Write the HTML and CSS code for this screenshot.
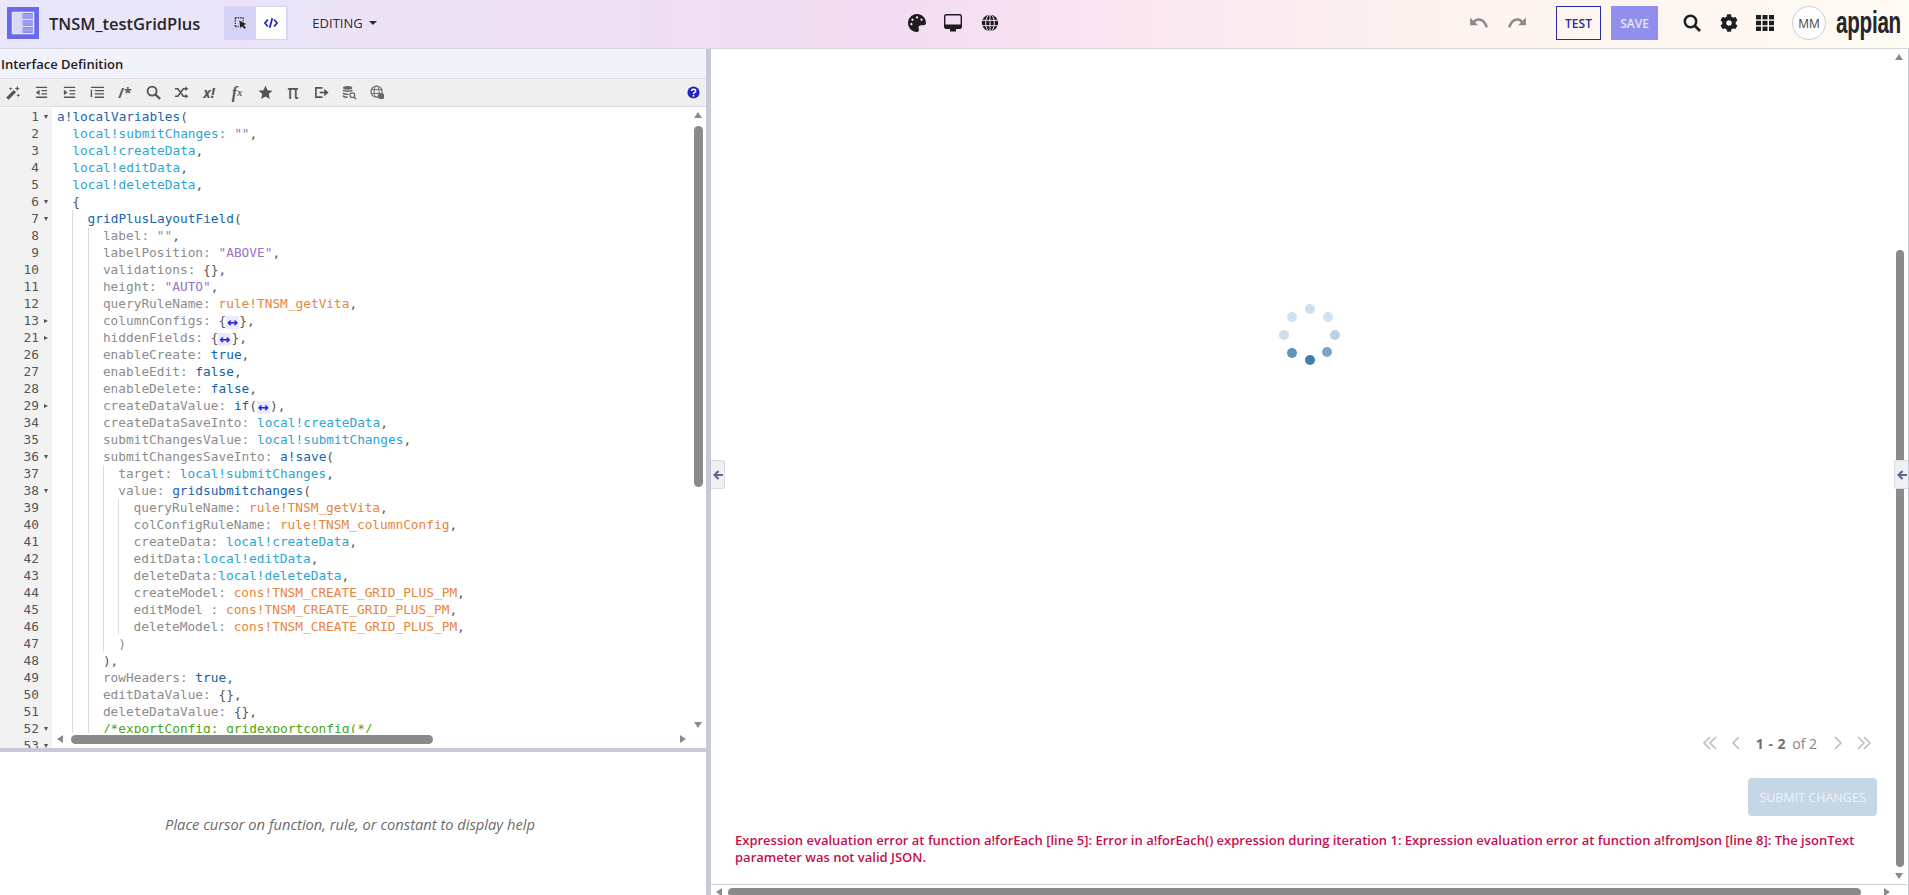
FILE: index.html
```html
<!DOCTYPE html>
<html lang="en">
<head>
    <meta charset="UTF-8">
    <meta name="viewport" content="width=device-width, initial-scale=1.0">
    <title>TNSM_testGridPlus</title>
    <link rel="stylesheet" href="styles.css">
</head>
<body>
    <header class="topbar">
        <div class="top-left">
            <svg class="app-logo" viewBox="0 0 32 32">
                <rect width="32" height="32" fill="#6a6ae6"/>
                <rect x="5.5" y="5.5" width="21" height="21" fill="none" stroke="#e4e4fb" stroke-width="1.5"/>
                <rect x="6" y="6" width="8.5" height="20" fill="#d8d8f8"/>
                <rect x="16" y="7" width="10" height="4.5" fill="#9c9cf0"/>
                <rect x="16" y="13.7" width="10" height="4.5" fill="#9c9cf0"/>
                <rect x="16" y="20.4" width="10" height="4.5" fill="#9c9cf0"/>
                <path d="M15 6v20M15.500 12.500H26M15.500 19.300H26" stroke="#e4e4fb" stroke-width="1.3"/>
            </svg>
            <span class="app-title">TNSM_testGridPlus</span>
            <div class="mode-toggle">
                <span class="mode-btn">
                    <svg class="icon-sm" viewBox="0 0 16 16">
                        <path d="M1.500 2h9M1.500 2v10M1.500 12h4M10.500 2v4" fill="none" stroke="#333" stroke-width="1.600" stroke-dasharray="1.600 1.200"/>
                        <path d="M6 5l8 4-3 1.300 2.600 3.200-1.700 1.300-2.500-3.200L7.300 14z" fill="#222"/>
                    </svg>
                </span>
                <span class="mode-btn active">
                    <svg class="icon-sm" viewBox="0 0 16 16">
                        <path d="M4.500 4L1 8l3.500 4M11.500 4L15 8l-3.500 4M9.500 2.500l-3 11" fill="none" stroke="#2323c4" stroke-width="2"/>
                    </svg>
                </span>
            </div>
            <span class="status">EDITING<i class="caret"></i></span>
        </div>
        <div class="top-center">
            <svg class="icon-lg" viewBox="0 0 512 512"><path fill="#1d1d1f" d="M204.3 5C104.9 24.4 24.8 104.3 5.2 203.4c-37 187 131.700 326.400 258.800 306.700 41.200-6.400 61.400-54.600 42.500-91.700-23.100-45.400 9.900-98.400 60.900-98.400h79.700c35.800 0 64.800-29.600 64.900-65.300C511.500 97.100 368.100-26.900 204.300 5zM96 320c-17.700 0-32-14.300-32-32s14.300-32 32-32 32 14.300 32 32-14.300 32-32 32zm32-128c-17.700 0-32-14.300-32-32s14.300-32 32-32 32 14.300 32 32-14.300 32-32 32zm128-64c-17.700 0-32-14.300-32-32s14.300-32 32-32 32 14.300 32 32-14.300 32-32 32zm128 64c-17.700 0-32-14.300-32-32s14.300-32 32-32 32 14.300 32 32-14.300 32-32 32z"/></svg>
            <svg class="icon-lg" viewBox="0 0 18 18">
                <rect x="0.700" y="0.700" width="16.600" height="13.600" rx="1.500" fill="none" stroke="#1d1d1f" stroke-width="1.400"/>
                <rect x="1" y="10.500" width="16" height="4" fill="#1d1d1f"/>
                <rect x="6" y="14" width="6" height="3.500" fill="#1d1d1f"/>
            </svg>
            <svg class="icon-lg" viewBox="0 0 18 18">
                <circle cx="9" cy="9" r="8.200" fill="#1d1d1f"/>
                <path d="M0 6.300h18M0 11.700h18M9 0v18" stroke="#f5e0f1" stroke-width="1"/>
                <ellipse cx="9" cy="9" rx="4.300" ry="8.400" fill="none" stroke="#f5e0f1" stroke-width="1"/>
            </svg>
        </div>
        <div class="top-right">
            <svg class="icon-history undo" viewBox="0 0 18 14"><path d="M4 6.500C7 2.500 13.500 2.500 16 11" fill="none" stroke="#8a8a8a" stroke-width="2.200"/><path d="M1 2v7h7z" fill="#8a8a8a"/></svg>
            <svg class="icon-history redo" viewBox="0 0 18 14"><path d="M14 6.500C11 2.500 4.500 2.500 2 11" fill="none" stroke="#8a8a8a" stroke-width="2.200"/><path d="M17 2v7h-7z" fill="#8a8a8a"/></svg>
            <button class="btn-test">TEST</button>
            <button class="btn-save">SAVE</button>
            <svg class="icon-action search" viewBox="0 0 18 18"><circle cx="7.500" cy="7.500" r="5.700" fill="none" stroke="#1d1d1f" stroke-width="2.500"/><path d="M11.800 11.800L17 17" stroke="#1d1d1f" stroke-width="2.800"/></svg>
            <svg class="icon-action gear" viewBox="0 0 512 512"><path fill="#1d1d1f" d="M487.400 315.700l-42.600-24.600c4.300-23.200 4.300-47 0-70.200l42.600-24.600c4.900-2.800 7.100-8.600 5.500-14-11.100-35.600-30-67.800-54.700-94.600-3.800-4.100-10-5.100-14.800-2.300L380.800 110c-17.900-15.400-38.500-27.300-60.800-35.100V25.800c0-5.600-3.900-10.500-9.400-11.700-36.700-8.200-74.300-7.800-109.200 0-5.500 1.200-9.400 6.100-9.400 11.700V75c-22.200 7.900-42.800 19.800-60.800 35.100L88.700 85.500c-4.900-2.800-11-1.900-14.800 2.300-24.700 26.700-43.600 58.900-54.700 94.600-1.700 5.400.6 11.200 5.500 14L67.300 221c-4.300 23.200-4.300 47 0 70.200l-42.600 24.600c-4.900 2.800-7.100 8.600-5.500 14 11.100 35.600 30 67.800 54.700 94.600 3.800 4.100 10 5.100 14.800 2.300l42.600-24.600c17.900 15.400 38.500 27.300 60.800 35.100v49.200c0 5.600 3.900 10.500 9.400 11.700 36.700 8.200 74.300 7.800 109.200 0 5.500-1.200 9.400-6.100 9.400-11.700v-49.200c22.200-7.900 42.800-19.800 60.800-35.100l42.600 24.600c4.900 2.800 11 1.900 14.800-2.300 24.700-26.700 43.600-58.900 54.700-94.600 1.500-5.500-.7-11.300-5.600-14.100zM256 336c-44.100 0-80-35.900-80-80s35.900-80 80-80 80 35.900 80 80-35.900 80-80 80z"/></svg>
            <svg class="icon-action grid" viewBox="0 0 18 16" fill="#1d1d1f">
                <rect x="0" y="0" width="5" height="4.400"/><rect x="6.500" y="0" width="5" height="4.400"/><rect x="13" y="0" width="5" height="4.400"/>
                <rect x="0" y="5.800" width="5" height="4.400"/><rect x="6.500" y="5.800" width="5" height="4.400"/><rect x="13" y="5.800" width="5" height="4.400"/>
                <rect x="0" y="11.600" width="5" height="4.400"/><rect x="6.500" y="11.600" width="5" height="4.400"/><rect x="13" y="11.600" width="5" height="4.400"/>
            </svg>
            <span class="avatar">MM</span>
            <span class="brand">appian</span>
        </div>
    </header>

    <main class="workspace">
        <section class="left-pane">
            <div class="pane-title">Interface Definition</div>
            <div class="toolbar">
                <span class="tool"><svg viewBox="0 0 16 16"><path d="M1.500 14.500l8-8" stroke="#555" stroke-width="3.400"/><path d="M12 1l.8 2 2 .8-2 .8-.8 2-.8-2-2-.8 2-.8zM5 2l.5 1.300L7 4l-1.500.6L5 6l-.5-1.400L3 4l1.500-.7zM13 9l.5 1.300 1.500.7-1.500.6L13 13l-.5-1.400L11 11l1.500-.7z" fill="#555"/></svg></span>
                <span class="tool"><svg viewBox="0 0 16 16"><path d="M2 2.500h12M8 6h6M8 9.500h6M2 13h12" stroke="#555" stroke-width="1.500"/><path d="M6 5v6L2 8z" fill="#555"/></svg></span>
                <span class="tool"><svg viewBox="0 0 16 16"><path d="M2 2.500h12M8 6h6M8 9.500h6M2 13h12" stroke="#555" stroke-width="1.500"/><path d="M2 5v6l4-3z" fill="#555"/></svg></span>
                <span class="tool"><svg viewBox="0 0 16 16"><path d="M1 2.500h14M5 6h10M5 9.500h10M5 13h10" stroke="#555" stroke-width="1.500"/><path d="M1.500 5v8" stroke="#555" stroke-width="1.500"/></svg></span>
                <span class="tool tool-text">/*</span>
                <span class="tool"><svg viewBox="0 0 16 16"><circle cx="6.500" cy="6.500" r="4.800" fill="none" stroke="#555" stroke-width="2"/><path d="M10 10l5 5" stroke="#555" stroke-width="2.400"/></svg></span>
                <span class="tool"><svg viewBox="0 0 16 16"><path d="M1 4h3l6 8h3M1 12h3l6-8h3" fill="none" stroke="#555" stroke-width="1.800"/><path d="M12 1.500l3.500 2.500L12 6.500zM12 9.500l3.500 2.500-3.500 2.500z" fill="#555"/></svg></span>
                <span class="tool tool-text tool-italic">x!</span>
                <span class="tool tool-text tool-fx">f<small>x</small></span>
                <span class="tool"><svg viewBox="0 0 16 16"><path d="M8 .8l2.200 4.800 5.200.6-3.900 3.500 1.100 5.200L8 12.300l-4.600 2.600 1.100-5.200L.6 6.200l5.200-.6z" fill="#555"/></svg></span>
                <span class="tool tool-text tool-pi">π</span>
                <span class="tool"><svg viewBox="0 0 16 16"><path d="M9 3H2v10h7" fill="none" stroke="#555" stroke-width="1.800"/><path d="M6 8h6" stroke="#555" stroke-width="1.800"/><path d="M11 4l4.500 4-4.500 4z" fill="#555"/></svg></span>
                <span class="tool"><svg viewBox="0 0 16 16"><ellipse cx="6" cy="3" rx="5" ry="2" fill="#666"/><path d="M1 5.500c1 1.500 9 1.500 10 0M1 8.500c1 1.500 5 1.500 6 1.200M1 11.500c1 1.300 4 1.500 5 1.300" fill="none" stroke="#666" stroke-width="1.600"/><circle cx="11" cy="11" r="2.500" fill="none" stroke="#666" stroke-width="1.300"/><path d="M13 13l2 2" stroke="#666" stroke-width="1.500"/></svg></span>
                <span class="tool"><svg viewBox="0 0 16 16"><circle cx="7" cy="7" r="6" fill="none" stroke="#666" stroke-width="1.200"/><ellipse cx="7" cy="7" rx="2.700" ry="6" fill="none" stroke="#666" stroke-width="1"/><path d="M1 5h12M1 9h12" stroke="#666"/><rect x="9" y="9" width="6" height="6" rx="1.500" fill="#666"/></svg></span>
                <svg class="help" viewBox="0 0 14 14"><circle cx="7" cy="7" r="6.500" fill="#2323c4"/><path d="M4.800 5.300C5 2.900 9.300 2.900 9.300 5.300 9.300 7 7 6.800 7 8.500" fill="none" stroke="#fff" stroke-width="1.700"/><rect x="6.100" y="9.600" width="1.800" height="1.800" fill="#fff"/></svg>
            </div>

            <div class="editor">
                <div class="row"><div class="ln"><span class="num">1</span><i class="fold open"></i></div><div class="src"><span class="fn">a!localVariables</span>(</div></div>
                <div class="row"><div class="ln"><span class="num">2</span></div><div class="src"><i class="sp"></i><span class="var">local!submitChanges</span><span class="key">:</span> <span class="str">""</span>,</div></div>
                <div class="row"><div class="ln"><span class="num">3</span></div><div class="src"><i class="sp"></i><span class="var">local!createData</span>,</div></div>
                <div class="row"><div class="ln"><span class="num">4</span></div><div class="src"><i class="sp"></i><span class="var">local!editData</span>,</div></div>
                <div class="row"><div class="ln"><span class="num">5</span></div><div class="src"><i class="sp"></i><span class="var">local!deleteData</span>,</div></div>
                <div class="row"><div class="ln"><span class="num">6</span><i class="fold open"></i></div><div class="src"><i class="sp"></i>{</div></div>
                <div class="row"><div class="ln"><span class="num">7</span><i class="fold open"></i></div><div class="src"><i class="sp"></i><i class="g"></i><span class="fn">gridPlusLayoutField</span>(</div></div>
                <div class="row"><div class="ln"><span class="num">8</span></div><div class="src"><i class="sp"></i><i class="g"></i><i class="g"></i><span class="key">label:</span> <span class="key">""</span>,</div></div>
                <div class="row"><div class="ln"><span class="num">9</span></div><div class="src"><i class="sp"></i><i class="g"></i><i class="g"></i><span class="key">labelPosition:</span> <span class="str">"ABOVE"</span>,</div></div>
                <div class="row"><div class="ln"><span class="num">10</span></div><div class="src"><i class="sp"></i><i class="g"></i><i class="g"></i><span class="key">validations:</span> {},</div></div>
                <div class="row"><div class="ln"><span class="num">11</span></div><div class="src"><i class="sp"></i><i class="g"></i><i class="g"></i><span class="key">height:</span> <span class="str">"AUTO"</span>,</div></div>
                <div class="row"><div class="ln"><span class="num">12</span></div><div class="src"><i class="sp"></i><i class="g"></i><i class="g"></i><span class="key">queryRuleName:</span> <span class="rule">rule!TNSM_getVita</span>,</div></div>
                <div class="row"><div class="ln"><span class="num">13</span><i class="fold shut"></i></div><div class="src"><i class="sp"></i><i class="g"></i><i class="g"></i><span class="key">columnConfigs:</span> {<span class="folded">↔</span>},</div></div>
                <div class="row"><div class="ln"><span class="num">21</span><i class="fold shut"></i></div><div class="src"><i class="sp"></i><i class="g"></i><i class="g"></i><span class="key">hiddenFields:</span> {<span class="folded">↔</span>},</div></div>
                <div class="row"><div class="ln"><span class="num">26</span></div><div class="src"><i class="sp"></i><i class="g"></i><i class="g"></i><span class="key">enableCreate:</span> <span class="bool">true</span>,</div></div>
                <div class="row"><div class="ln"><span class="num">27</span></div><div class="src"><i class="sp"></i><i class="g"></i><i class="g"></i><span class="key">enableEdit:</span> <span class="bool">false</span>,</div></div>
                <div class="row"><div class="ln"><span class="num">28</span></div><div class="src"><i class="sp"></i><i class="g"></i><i class="g"></i><span class="key">enableDelete:</span> <span class="bool">false</span>,</div></div>
                <div class="row"><div class="ln"><span class="num">29</span><i class="fold shut"></i></div><div class="src"><i class="sp"></i><i class="g"></i><i class="g"></i><span class="key">createDataValue:</span> <span class="bool">if</span>(<span class="folded">↔</span>),</div></div>
                <div class="row"><div class="ln"><span class="num">34</span></div><div class="src"><i class="sp"></i><i class="g"></i><i class="g"></i><span class="key">createDataSaveInto:</span> <span class="var">local!createData</span>,</div></div>
                <div class="row"><div class="ln"><span class="num">35</span></div><div class="src"><i class="sp"></i><i class="g"></i><i class="g"></i><span class="key">submitChangesValue:</span> <span class="var">local!submitChanges</span>,</div></div>
                <div class="row"><div class="ln"><span class="num">36</span><i class="fold open"></i></div><div class="src"><i class="sp"></i><i class="g"></i><i class="g"></i><span class="key">submitChangesSaveInto:</span> <span class="fn">a!save</span>(</div></div>
                <div class="row"><div class="ln"><span class="num">37</span></div><div class="src"><i class="sp"></i><i class="g"></i><i class="g"></i><i class="g"></i><span class="key">target:</span> <span class="var">local!submitChanges</span>,</div></div>
                <div class="row"><div class="ln"><span class="num">38</span><i class="fold open"></i></div><div class="src"><i class="sp"></i><i class="g"></i><i class="g"></i><i class="g"></i><span class="key">value:</span> <span class="fn">gridsubmitchanges</span>(</div></div>
                <div class="row"><div class="ln"><span class="num">39</span></div><div class="src"><i class="sp"></i><i class="g"></i><i class="g"></i><i class="g"></i><i class="g"></i><span class="key">queryRuleName:</span> <span class="rule">rule!TNSM_getVita</span>,</div></div>
                <div class="row"><div class="ln"><span class="num">40</span></div><div class="src"><i class="sp"></i><i class="g"></i><i class="g"></i><i class="g"></i><i class="g"></i><span class="key">colConfigRuleName:</span> <span class="rule">rule!TNSM_columnConfig</span>,</div></div>
                <div class="row"><div class="ln"><span class="num">41</span></div><div class="src"><i class="sp"></i><i class="g"></i><i class="g"></i><i class="g"></i><i class="g"></i><span class="key">createData:</span> <span class="var">local!createData</span>,</div></div>
                <div class="row"><div class="ln"><span class="num">42</span></div><div class="src"><i class="sp"></i><i class="g"></i><i class="g"></i><i class="g"></i><i class="g"></i><span class="key">editData:</span><span class="var">local!editData</span>,</div></div>
                <div class="row"><div class="ln"><span class="num">43</span></div><div class="src"><i class="sp"></i><i class="g"></i><i class="g"></i><i class="g"></i><i class="g"></i><span class="key">deleteData:</span><span class="var">local!deleteData</span>,</div></div>
                <div class="row"><div class="ln"><span class="num">44</span></div><div class="src"><i class="sp"></i><i class="g"></i><i class="g"></i><i class="g"></i><i class="g"></i><span class="key">createModel:</span> <span class="rule">cons!TNSM_CREATE_GRID_PLUS_PM</span>,</div></div>
                <div class="row"><div class="ln"><span class="num">45</span></div><div class="src"><i class="sp"></i><i class="g"></i><i class="g"></i><i class="g"></i><i class="g"></i><span class="key">editModel :</span> <span class="rule">cons!TNSM_CREATE_GRID_PLUS_PM</span>,</div></div>
                <div class="row"><div class="ln"><span class="num">46</span></div><div class="src"><i class="sp"></i><i class="g"></i><i class="g"></i><i class="g"></i><i class="g"></i><span class="key">deleteModel:</span> <span class="rule">cons!TNSM_CREATE_GRID_PLUS_PM</span>,</div></div>
                <div class="row"><div class="ln"><span class="num">47</span></div><div class="src"><i class="sp"></i><i class="g"></i><i class="g"></i><i class="g"></i><span class="key">)</span></div></div>
                <div class="row"><div class="ln"><span class="num">48</span></div><div class="src"><i class="sp"></i><i class="g"></i><i class="g"></i>),</div></div>
                <div class="row"><div class="ln"><span class="num">49</span></div><div class="src"><i class="sp"></i><i class="g"></i><i class="g"></i><span class="key">rowHeaders:</span> <span class="bool">true</span>,</div></div>
                <div class="row"><div class="ln"><span class="num">50</span></div><div class="src"><i class="sp"></i><i class="g"></i><i class="g"></i><span class="key">editDataValue:</span> {},</div></div>
                <div class="row"><div class="ln"><span class="num">51</span></div><div class="src"><i class="sp"></i><i class="g"></i><i class="g"></i><span class="key">deleteDataValue:</span> {},</div></div>
                <div class="row"><div class="ln"><span class="num">52</span><i class="fold open"></i></div><div class="src"><i class="sp"></i><i class="g"></i><i class="g"></i><span class="comment">/*exportConfig: gridexportconfig(*/</span></div></div>
                <div class="row"><div class="ln"><span class="num">53</span><i class="fold open"></i></div><div class="src"></div></div>

                <div class="vbar">
                    <i class="tri tri-up"></i>
                    <i class="thumb-v"></i>
                    <i class="tri tri-down"></i>
                </div>
                <div class="hbar">
                    <i class="tri tri-left"></i>
                    <i class="thumb-h"></i>
                    <i class="tri tri-right"></i>
                </div>
            </div>

            <div class="help-panel">Place cursor on function, rule, or constant to display help</div>
        </section>

        <div class="divider"></div>

        <section class="right-pane">
            <span class="collapse-tab tab-left"><svg viewBox="0 0 10 10"><path d="M5.500 1L1.500 5l4 4M2 5h8" fill="none" stroke="#5a6b85" stroke-width="2.200"/></svg></span>
            <span class="collapse-tab tab-right"><svg viewBox="0 0 10 10"><path d="M5.500 1L1.500 5l4 4M2 5h8" fill="none" stroke="#5a6b85" stroke-width="2.200"/></svg></span>

            <div class="preview">
                <svg class="spinner" viewBox="0 0 62 62">
                    <circle cx="31" cy="5" r="5" fill="#d0dfe9"/>
                    <circle cx="49" cy="13" r="5" fill="#d3e1ec"/>
                    <circle cx="56" cy="31" r="5" fill="#bbd0e2"/>
                    <circle cx="48" cy="48" r="5" fill="#7ea6c4"/>
                    <circle cx="31" cy="56" r="5" fill="#3f7ea9"/>
                    <circle cx="13" cy="49" r="5" fill="#5f93b8"/>
                    <circle cx="5" cy="31" r="5" fill="#d0dee9"/>
                    <circle cx="13" cy="13" r="5" fill="#d3e1ec"/>
                </svg>
                <div class="pager">
                    <svg class="pg-icon" viewBox="0 0 16 16"><path d="M8 2L2 8l6 6M14 2L8 8l6 6" fill="none" stroke="#bdbdbd" stroke-width="1.600"/></svg>
                    <svg class="pg-icon" viewBox="0 0 16 16"><path d="M11 2L5 8l6 6" fill="none" stroke="#bdbdbd" stroke-width="1.600"/></svg>
                    <span class="pg-range"><b>1 - 2</b> of 2</span>
                    <svg class="pg-icon" viewBox="0 0 16 16"><path d="M5 2l6 6-6 6" fill="none" stroke="#bdbdbd" stroke-width="1.600"/></svg>
                    <svg class="pg-icon" viewBox="0 0 16 16"><path d="M2 2l6 6-6 6M8 2l6 6-6 6" fill="none" stroke="#bdbdbd" stroke-width="1.600"/></svg>
                </div>
                <button class="btn-submit">SUBMIT CHANGES</button>
                <p class="error">Expression evaluation error at function a!forEach [line 5]: Error in a!forEach() expression during iteration 1: Expression evaluation error at function a!fromJson [line 8]: The jsonText parameter was not valid JSON.</p>
            </div>

            <div class="vbar-right">
                <i class="tri tri-up"></i>
                <i class="thumb-right"></i>
                <i class="tri tri-down"></i>
            </div>
            <div class="hbar-right">
                <i class="tri tri-left"></i>
                <i class="thumb-bottom"></i>
                <i class="tri tri-right"></i>
            </div>
        </section>
    </main>
</body>
</html>
```

FILE: styles.css
```css
* {
    margin: 0;
    padding: 0;
    box-sizing: border-box;
}

html, body {
    height: 100%;
}

body {
    display: flex;
    flex-direction: column;
    overflow: hidden;
    background: #fff;
    color: #1d1d1f;
    font-family: "Open Sans", "Liberation Sans", sans-serif;
}

i {
    font-style: normal;
}

/* top bar */
.topbar {
    display: grid;
    grid-template-columns: 1fr auto 1fr;
    align-items: center;
    height: 49px;
    flex: none;
    padding-bottom: 2px;
    border-bottom: 1px solid #d6d6de;
    background: linear-gradient(90deg, #e8e7fb 0%, #f3dcf1 47%, #fae5f2 58%, #fdf4ef 78%, #fffaf3 100%);
}

.top-left {
    display: flex;
    align-items: center;
    padding-left: 7px;
}

.app-logo {
    width: 32px;
    height: 32px;
    flex: none;
}

.app-title {
    margin-left: 10px;
    font-size: 16.500px;
    font-weight: 600;
    color: #25252a;
}

.mode-toggle {
    display: flex;
    height: 34px;
    margin-left: 24px;
    background: #d6d4f6;
}

.mode-btn {
    display: flex;
    align-items: center;
    justify-content: center;
    width: 32px;
    padding-left: 2px;
}

.mode-btn.active {
    width: 30px;
    margin: 1px 2px 1px 0;
    padding-left: 0;
    background: #fff;
}

.icon-sm {
    width: 14px;
    height: 14px;
}

.status {
    display: flex;
    align-items: center;
    margin-left: 24px;
    font-size: 13px;
    color: #2b2b30;
}

.caret {
    width: 0;
    height: 0;
    margin-left: 6px;
    border: 4px solid transparent;
    border-top: 4px solid #2b2b30;
    border-bottom: 0;
}

.top-center {
    display: flex;
    gap: 18.500px;
    align-items: center;
    margin-left: -3px;
}

.icon-lg {
    width: 18px;
    height: 18px;
}

.top-right {
    display: flex;
    align-items: center;
    justify-content: flex-end;
    padding-right: 10px;
}

.icon-history {
    width: 20px;
    height: 16px;
}

.redo {
    margin-left: 18px;
}

.btn-test,
.btn-save {
    height: 34px;
    font-family: inherit;
    font-size: 12px;
    font-weight: 600;
}

.btn-test {
    width: 45px;
    margin-left: 29px;
    border: 1.500px solid #2b2ba0;
    background: transparent;
    color: #2b2ba0;
}

.btn-save {
    width: 47px;
    margin-left: 10px;
    border: none;
    background: #9090ec;
    color: #e6e6fb;
}

.icon-action {
    flex: none;
}

.search {
    width: 18px;
    height: 18px;
    margin-left: 25px;
}

.gear {
    width: 18px;
    height: 18px;
    margin-left: 19px;
}

.grid {
    width: 18px;
    height: 16px;
    margin-left: 18px;
}

.avatar {
    display: flex;
    align-items: center;
    justify-content: center;
    width: 34px;
    height: 34px;
    margin-left: 18px;
    border: 1px solid #cfcfcf;
    border-radius: 50%;
    background: #fff;
    font-size: 12px;
    color: #444;
}

.brand {
    display: inline-block;
    width: 63px;
    margin-left: 10px;
    font-family: "Liberation Sans", sans-serif;
    font-size: 24px;
    font-weight: 700;
    line-height: 34px;
    letter-spacing: -0.3px;
    color: #26262a;
    transform: scale(0.86, 1.28);
    transform-origin: left center;
    white-space: nowrap;
}

/* panes */
.workspace {
    display: flex;
    flex: 1;
    min-height: 0;
}

.left-pane {
    display: flex;
    flex-direction: column;
    flex: none;
    width: 706px;
}

.pane-title {
    flex: none;
    height: 30px;
    padding-left: 1px;
    border-bottom: 1px solid #dedee6;
    background: #f2f2fd;
    font-size: 13px;
    font-weight: 600;
    line-height: 30px;
}

.toolbar {
    display: flex;
    align-items: center;
    flex: none;
    height: 28px;
    padding-left: 1px;
    border-bottom: 1px solid #dcdcdc;
    background: #efefef;
}

.tool {
    display: flex;
    align-items: center;
    justify-content: center;
    flex: none;
    width: 28px;
    color: #555;
    font-size: 14px;
}

.tool:first-child {
    margin-left: -2px;
}

.tool svg {
    width: 15px;
    height: 15px;
}

.tool-text {
    font-weight: 700;
    font-size: 14px;
}

.tool-italic,
.tool-fx {
    font-style: italic;
}

.tool-fx {
    font-family: "Liberation Serif", serif;
    font-size: 16px;
}

.tool-fx small {
    font-size: 10px;
}

.tool-pi {
    font-family: "DejaVu Sans", sans-serif;
    font-size: 19px;
    font-weight: 400;
    line-height: 17px;
}

.help {
    width: 13px;
    height: 13px;
    margin-left: auto;
    margin-right: 6px;
}

/* code editor */
.editor {
    position: relative;
    flex: none;
    height: 641px;
    padding-top: 1px;
    overflow: hidden;
    font-family: "DejaVu Sans Mono", monospace;
    font-size: 12.800px;
    color: #555;
}

.row {
    display: flex;
    height: 17px;
    line-height: 17px;
}

.ln {
    display: flex;
    align-items: center;
    flex: none;
    width: 52px;
    background: #f2f2f2;
    color: #555;
}

.num {
    width: 39px;
    text-align: right;
}

.fold {
    width: 0;
    height: 0;
    margin-left: 5px;
    border-style: solid;
    border-color: transparent;
}

.fold.open {
    border-width: 4px 2.500px 0;
    border-top-color: #555;
}

.fold.shut {
    border-width: 2.500px 0 2.500px 4px;
    border-left-color: #555;
}

.src {
    flex: 1;
    padding-left: 5px;
    white-space: pre;
}

.sp,
.g {
    display: inline-block;
    width: 15.300px;
    height: 17px;
    vertical-align: top;
}

.g {
    border-left: 1px solid #dcdcdc;
}

.fn { color: #1a64ad; }
.var { color: #2ea5d2; }
.key { color: #8c8c8c; }
.str { color: #9a72c6; }
.rule { color: #e8843c; }
.bool { color: #105fa8; }
.comment { color: #4aa512; }

.folded {
    display: inline-block;
    width: 13px;
    height: 13px;
    background: #ecebfd;
    color: #2323d0;
    font-family: "DejaVu Sans", sans-serif;
    font-size: 13px;
    font-weight: 700;
    line-height: 13px;
    text-align: center;
    vertical-align: -2px;
}

.vbar {
    position: absolute;
    top: 0;
    right: 0;
    bottom: 15px;
    width: 15px;
    background: #fff;
}

.thumb-v {
    position: absolute;
    top: 19px;
    left: 3px;
    width: 9px;
    height: 361px;
    border-radius: 5px;
    background: #8a8a8a;
}

.hbar {
    position: absolute;
    left: 52px;
    right: 0;
    bottom: 0;
    height: 15px;
    background: #fff;
}

.thumb-h {
    position: absolute;
    top: 2px;
    left: 19px;
    width: 362px;
    height: 9px;
    border-radius: 5px;
    background: #8a8a8a;
}

.tri {
    position: absolute;
    width: 0;
    height: 0;
    border-style: solid;
    border-color: transparent;
}

.tri-up {
    top: 5px;
    left: 3px;
    border-width: 0 4.500px 6px;
    border-bottom-color: #8a8a8a;
}

.tri-down {
    bottom: 5px;
    left: 3px;
    border-width: 6px 4.500px 0;
    border-top-color: #8a8a8a;
}

.tri-left {
    top: 2px;
    left: 5px;
    border-width: 4.500px 6px 4.500px 0;
    border-right-color: #8a8a8a;
}

.tri-right {
    top: 2px;
    right: 20px;
    border-width: 4.500px 0 4.500px 6px;
    border-left-color: #8a8a8a;
}

.help-panel {
    display: flex;
    align-items: center;
    justify-content: center;
    flex: 1;
    padding-right: 6px;
    border-top: 4px solid #c6cad8;
    font-size: 14.700px;
    font-style: italic;
    color: #6b6b6b;
}

.divider {
    flex: none;
    width: 5px;
    background: #c6cad8;
}

/* preview */
.right-pane {
    position: relative;
    flex: 1;
    min-width: 0;
    border-right: 1px solid #c6cad8;
}

.collapse-tab {
    position: absolute;
    top: 411px;
    display: flex;
    align-items: center;
    justify-content: center;
    width: 14px;
    height: 29px;
    border: 1px solid #d8dbe5;
    background: #eef0f6;
    z-index: 2;
}

.collapse-tab svg {
    width: 10px;
    height: 10px;
}

.tab-left {
    left: 0;
    border-left: none;
    border-radius: 0 3px 3px 0;
}

.tab-right {
    right: 0;
    border-right: none;
    border-radius: 3px 0 0 3px;
}

.preview {
    display: flex;
    flex-direction: column;
    padding: 255px 31px 0 24px;
}

.spinner {
    align-self: center;
    width: 62px;
    height: 62px;
    margin-left: 8px;
}

.pager {
    display: flex;
    align-items: center;
    align-self: flex-end;
    height: 20px;
    margin-top: 367px;
}

.pg-icon {
    width: 16px;
    height: 16px;
    margin: 0 5px;
}

.pg-range {
    margin: 0 8px 0 7px;
    font-size: 14px;
    color: #858585;
}

.pg-range b {
    margin-right: 3px;
    font-weight: 700;
    color: #707070;
    word-spacing: 1px;
}

.btn-submit {
    align-self: flex-end;
    width: 129px;
    height: 38px;
    margin-top: 25px;
    border: none;
    border-radius: 4px;
    background: #c5d6e4;
    color: #eef3f8;
    font-family: inherit;
    font-size: 12.500px;
}

.error {
    margin-top: 16px;
    font-size: 13px;
    font-weight: 600;
    line-height: 17px;
    color: #c4104f;
}

.vbar-right {
    position: absolute;
    top: 0;
    right: 1px;
    bottom: 11px;
    width: 14px;
    background: #fff;
    z-index: 1;
}

.vbar-right .tri {
    left: 2px;
}

.thumb-right {
    position: absolute;
    top: 201px;
    left: 3px;
    width: 8px;
    height: 617px;
    border-radius: 4px;
    background: #8a8a8a;
}

.hbar-right {
    position: absolute;
    left: 0;
    right: 1px;
    bottom: 0;
    height: 11px;
    border-top: 1px solid #cfd2dc;
    background: #fff;
}

.hbar-right .tri-left {
    top: 3px;
}

.hbar-right .tri-right {
    top: 3px;
    right: 17px;
}

.thumb-bottom {
    position: absolute;
    top: 3px;
    left: 17px;
    width: 1133px;
    height: 9px;
    border-radius: 5px;
    background: #8a8a8a;
}
```
